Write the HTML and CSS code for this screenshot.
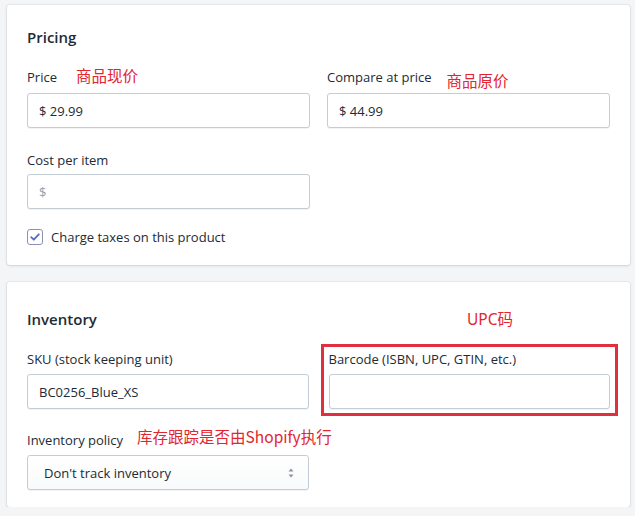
FILE: index.html
```html
<!DOCTYPE html>
<html lang="en">
<head>
<meta charset="utf-8">
<title>Product pricing and inventory</title>
<link rel="stylesheet" href="styles.css">
</head>
<body>
<main class="page">
  <section class="card card-pricing">
    <h2 class="card-title">Pricing</h2>
    <div class="grid grid-pricing">
      <div class="field">
        <div class="label-row label-row-annot">
          <label class="label">Price</label>
          <span class="annot annot-price">商品现价</span>
        </div>
        <div class="input"><span class="value">$ 29.99</span></div>
      </div>
      <div class="field">
        <div class="label-row label-row-annot">
          <label class="label">Compare at price</label>
          <span class="annot annot-compare">商品原价</span>
        </div>
        <div class="input"><span class="value">$ 44.99</span></div>
      </div>
    </div>
    <div class="grid grid-pricing row-cost">
      <div class="field">
        <div class="label-row">
          <label class="label">Cost per item</label>
        </div>
        <div class="input"><span class="placeholder">$</span></div>
      </div>
    </div>
    <div class="check-row">
      <span class="checkbox">
        <svg width="12" height="12" viewBox="0 0 12 12"><path d="M2.2 6.2 L4.8 8.7 L9.8 3.3" fill="none" stroke="#5c6ac4" stroke-width="1.8" stroke-linecap="round" stroke-linejoin="round"/></svg>
      </span>
      <span class="check-label">Charge taxes on this product</span>
    </div>
  </section>

  <section class="card card-inventory">
    <h2 class="card-title">Inventory</h2>
    <span class="annot annot-upc">UPC码</span>
    <div class="grid grid-inventory">
      <div class="field">
        <div class="label-row">
          <label class="label">SKU (stock keeping unit)</label>
        </div>
        <div class="input"><span class="value">BC0256_Blue_XS</span></div>
      </div>
      <div class="field field-marked">
        <div class="label-row">
          <label class="label">Barcode (ISBN, UPC, GTIN, etc.)</label>
        </div>
        <div class="input"></div>
        <span class="mark-box"></span>
      </div>
    </div>
    <div class="grid grid-inventory row-policy">
      <div class="field">
        <div class="label-row">
          <label class="label">Inventory policy</label>
          <span class="annot annot-policy">库存跟踪是否由Shopify执行</span>
        </div>
        <div class="input select">
          <span class="value">Don't track inventory</span>
          <svg class="arrows" width="8" height="12" viewBox="0 0 8 12"><path d="M4 1.5 L6.5 4.5 H1.5 Z" fill="#8a939c"/><path d="M4 10.5 L6.5 7.5 H1.5 Z" fill="#8a939c"/></svg>
        </div>
      </div>
    </div>
  </section>
</main>
</body>
</html>
```

FILE: styles.css
```css
* { box-sizing: border-box; }

html, body {
  margin: 0;
  padding: 0;
  background: #f4f5f6;
}

body {
  font-family: "Open Sans", "Noto Sans", "Noto Sans CJK SC", sans-serif;
  font-size: 13px;
  color: #212b36;
}

.page {
  padding: 5px 5px 0 7px;
  display: flex;
  flex-direction: column;
  gap: 17px;
  width: 637px;
}

.card {
  position: relative;
  width: 623px;
  background: #ffffff;
  border-radius: 3px;
  box-shadow: 0 0 0 1px rgba(63, 63, 68, 0.05), 0 1px 3px rgba(63, 63, 68, 0.15);
  padding: 20px 20px 20px 20px;
}

.card-inventory {
  padding-top: 25px;
  padding-bottom: 17px;
}

.card-title {
  margin: 0 0 18px;
  font-size: 15px;
  font-weight: 600;
  line-height: 24px;
  color: #212b36;
}

.grid {
  display: grid;
  grid-template-columns: minmax(0, 1fr) minmax(0, 1fr);
}

.grid-pricing { column-gap: 17px; }
.grid-inventory { column-gap: 20px; }

.row-cost { margin-top: 22px; }
.row-policy { margin-top: 21px; }

.field { position: relative; min-width: 0; }

.label-row {
  height: 20px;
  display: flex;
  align-items: center;
  margin-bottom: 5px;
  white-space: nowrap;
}

.label-row-annot {
  margin-bottom: 6px;
}

.row-cost .label-row { margin-bottom: 4px; }

.label {
  line-height: 20px;
  color: #212b36;
}

.annot {
  font-family: "Noto Sans CJK SC", "Noto Sans", sans-serif;
  font-size: 15.5px;
  color: #e3252f;
  line-height: 20px;
}

.annot-price { margin-left: 19px; position: relative; top: -2px; }
.annot-compare { margin-left: 15px; position: relative; top: 3px; }
.annot-policy { margin-left: 14px; position: relative; top: -4px; }

.annot-upc {
  position: absolute;
  left: 460px;
  top: 27px;
  font-family: "Noto Sans", "Noto Sans CJK SC", sans-serif;
}

.input {
  height: 35px;
  border: 1px solid #c4cdd5;
  border-radius: 3px;
  background: #ffffff;
  box-shadow: 0 1px 0 rgba(22, 29, 37, 0.05);
  display: flex;
  align-items: center;
  padding: 0 11px;
  line-height: 20px;
}

.value { color: #212b36; }
.placeholder { color: #919eab; }

.select {
  padding: 0 13px 0 16px;
  justify-content: space-between;
  background: linear-gradient(#ffffff, #f9fafb);
}

.arrows { display: block; }

.check-row {
  margin-top: 20px;
  display: flex;
  align-items: center;
  gap: 8px;
  height: 16px;
}

.checkbox {
  width: 16px;
  height: 16px;
  border: 1px solid #8b8fb4;
  border-radius: 3px;
  display: flex;
  align-items: center;
  justify-content: center;
  background: #ffffff;
}

.checkbox svg { display: block; }

.check-label { line-height: 20px; }

.mark-box {
  position: absolute;
  left: -8px;
  right: -8px;
  top: -5px;
  bottom: -7px;
  border: 3px solid #e0303f;
  pointer-events: none;
}
```
